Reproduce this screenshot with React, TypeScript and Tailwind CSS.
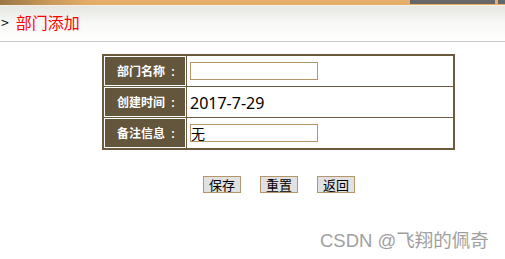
import React from 'react';

const rows = [
  { label: '部门名称', kind: 'input', value: '' },
  { label: '创建时间', kind: 'text', value: '2017-7-29' },
  { label: '备注信息', kind: 'input', value: '无' },
];

const cjk = '"Microsoft YaHei", "Noto Sans CJK SC", "Liberation Sans", sans-serif';

export default function App() {
  return (
    <div className="w-[505px] h-[259px] bg-white relative overflow-hidden" style={{ fontFamily: cjk }}>
      {/* top strip */}
      <div className="h-[5px] flex bg-[linear-gradient(90deg,#9c7643_0%,#c99a5c_10%,#e4ae6a_18%,#e4ae6a_100%)]">
        <div className="flex-1" />
        <div className="w-[85px] h-[4px] bg-[#666666]" />
        <div className="w-[3px]" />
        <div className="w-[7px] h-[4px] bg-[#666666]" />
      </div>
      <div className="h-[1px] bg-[#f6efe3]" />

      {/* title band */}
      <div className="h-[36px] flex items-center pb-[4px] bg-[linear-gradient(180deg,#e6e6e2_0%,#f7f7f5_45%,#ffffff_100%)] border-b border-[#cccccc]">
        <span className="text-[14px] text-black leading-none ml-[1px] mt-[1px]">&gt;</span>
        <span className="text-[16px] text-[#ff0000] leading-none ml-[7px]">部门添加</span>
      </div>

      {/* form table */}
      <div className="ml-[102px] mt-[12px] w-[353px] border border-[#6b5a3e]">
        <table className="w-full border-collapse">
          <tbody>
            {rows.map((r) => (
              <tr key={r.label} className="h-[31px]">
                <td className="w-[83px] p-0 pl-[2px] border border-[#6b5a3e] bg-[#64563c] shadow-[inset_0_0_0_1px_#ffffff] text-center text-white text-[12px] font-bold">
                  {r.label}
                  <span className="ml-[6px]" style={{ fontFamily: '"Liberation Sans", sans-serif' }}>:</span>
                </td>
                <td className="p-0 pl-[3px] border border-[#6b5a3e] text-left">
                  {r.kind === 'input' ? (
                    <div className="w-[128px] h-[18px] border border-[#b4966a] bg-white text-[14px] leading-[16px] text-black">
                      {r.value}
                    </div>
                  ) : (
                    <span className="text-[16px] text-black" style={{ fontFamily: '"Noto Sans", "Liberation Sans", sans-serif' }}>
                      {r.value}
                    </span>
                  )}
                </td>
              </tr>
            ))}
          </tbody>
        </table>
      </div>

      {/* buttons */}
      <div className="flex ml-[203px] mt-[26px] gap-[19px]">
        {['保存', '重置', '返回'].map((b) => (
          <button
            key={b}
            className="w-[38px] h-[17px] bg-[#e1e1e1] border border-[#b4966a] text-[13px] leading-[15px] text-black p-0"
          >
            {b}
          </button>
        ))}
      </div>

      {/* watermark */}
      <div className="absolute left-[320px] top-[232px] text-[18.5px] text-[#a0a0a0] leading-none" style={{ fontFamily: '"Liberation Sans", "Noto Sans CJK SC", sans-serif' }}>
        CSDN @飞翔的佩奇
      </div>
    </div>
  );
}
